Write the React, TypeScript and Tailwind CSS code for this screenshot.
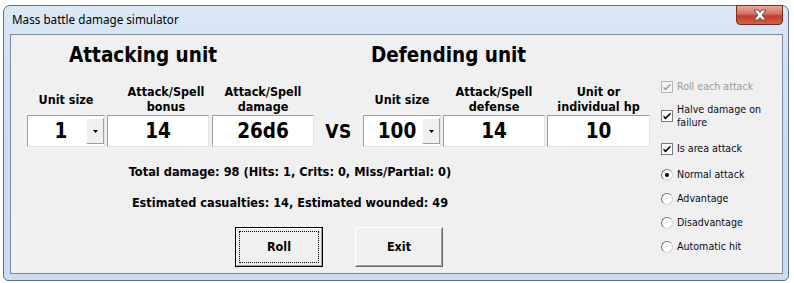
import React from 'react';

// Win7 style dialog: mass battle damage simulator

const Label = ({ children, className = '' }: { children: React.ReactNode; className?: string }) => (
  <div className={`h-[30px] flex items-center justify-center text-center text-[12.5px] leading-[15px] font-bold text-black ${className}`}>
    {children}
  </div>
);

const Field = ({ value }: { value: string }) => (
  <div className="h-[32px] bg-white border border-t-[#a0a0a0] border-l-[#a0a0a0] border-r-[#e3e3e3] border-b-[#e3e3e3] flex items-center justify-center text-[20.5px] font-bold text-black">
    {value}
  </div>
);

const Combo = ({ value }: { value: string }) => (
  <div className="h-[32px] bg-white border border-t-[#a0a0a0] border-l-[#a0a0a0] border-r-[#e3e3e3] border-b-[#e3e3e3] flex">
    <div className="flex-1 flex items-center justify-center pl-[8px] text-[20.5px] font-bold text-black">{value}</div>
    <div className="w-[18px] my-[2px] bg-[#f0f0f0] border border-t-white border-l-white border-r-[#a0a0a0] border-b-[#a0a0a0] flex items-center justify-center">
      <svg width="5" height="3" viewBox="0 0 5 3">
        <path d="M0 0h5L2.5 3z" fill="#000" />
      </svg>
    </div>
  </div>
);

const Check = ({ disabled = false }: { disabled?: boolean }) => (
  <div
    className={`w-[12px] h-[12px] shrink-0 border flex items-center justify-center ${
      disabled ? 'border-[#b5b5b5] bg-[#f4f4f4]' : 'border-[#7b7b7b] bg-white'
    }`}
  >
    <svg width="8" height="8" viewBox="0 0 8 8">
      <path d="M0.5 3.2l2 2 5-5v2.4l-5 5-2-2z" fill={disabled ? '#a0a0a0' : '#000'} />
    </svg>
  </div>
);

const Radio = ({ on = false }: { on?: boolean }) => (
  <div className="w-[12px] h-[12px] shrink-0 rounded-full border border-t-[#7b7b7b] border-l-[#7b7b7b] border-r-[#d0d0d0] border-b-[#d0d0d0] bg-white flex items-center justify-center">
    {on && <div className="w-[4px] h-[4px] rounded-full bg-black" />}
  </div>
);

export default function App() {
  return (
    <div className="w-[794px] h-[283px] bg-white overflow-hidden pt-[5px] pl-[3px] font-['DejaVu_Sans_Condensed','DejaVu_Sans',sans-serif]">
      <div className="relative w-[786px] h-[276px] rounded-t-[7px] rounded-b-[5px] border border-[#5f7085] bg-[linear-gradient(180deg,#dbe8f6_0%,#cddff2_30%,#c9dcf1_100%)] flex flex-col">
        {/* title bar */}
        <div className="h-[28px] flex items-center pl-[8px] text-[11.7px] text-black font-['Noto_Sans',sans-serif]">
          Mass battle damage simulator
        </div>
        <div className="absolute top-[-1px] right-[5px] w-[47px] h-[20px] rounded-b-[4px] border border-[#7d2c22] bg-[linear-gradient(180deg,#e9a89b_0%,#d46f5f_45%,#c13b28_55%,#d0624f_100%)] flex items-center justify-center">
          <svg width="16" height="12" viewBox="0 0 16 12">
            <path d="M2 1h4l2 2.4L10 1h4l-4 5 4 5h-4l-2-2.4L6 11H2l4-5z" fill="#fff" stroke="#4a4a4a" strokeWidth="0.9" strokeLinejoin="round" />
          </svg>
        </div>

        {/* client area */}
        <div className="ml-[6px] mr-[5px] h-[240px] border border-[#7c8b9c] bg-[#f0f0f0] flex text-black">
          {/* left part */}
          <div className="w-[650px] flex flex-col">
            <div className="mt-[8px] flex h-[24px] items-center text-[20.5px] leading-[24px] font-bold pl-[58px]">
              <div className="w-[302px]">Attacking unit</div>
              <div>Defending unit</div>
            </div>

            <div className="mt-[17px] flex pl-[16px]">
              <div className="w-[78px] flex flex-col">
                <Label>Unit size</Label>
                <div className="mt-[1px]"><Combo value="1" /></div>
              </div>
              <div className="w-[102px] ml-[2px] flex flex-col">
                <Label className="pl-[16px]">
                  Attack/Spell
                  <br />
                  bonus
                </Label>
                <div className="mt-[1px]"><Field value="14" /></div>
              </div>
              <div className="w-[102px] ml-[3px] flex flex-col">
                <Label>
                  Attack/Spell
                  <br />
                  damage
                </Label>
                <div className="mt-[1px]"><Field value="26d6" /></div>
              </div>
              <div className="w-[49px] flex flex-col">
                <div className="h-[31px]" />
                <div className="h-[32px] flex items-center justify-center text-[19px] font-bold tracking-[0.5px]">VS</div>
              </div>
              <div className="w-[78px] flex flex-col">
                <Label>Unit size</Label>
                <div className="mt-[1px]"><Combo value="100" /></div>
              </div>
              <div className="w-[102px] ml-[2px] flex flex-col">
                <Label>
                  Attack/Spell
                  <br />
                  defense
                </Label>
                <div className="mt-[1px]"><Field value="14" /></div>
              </div>
              <div className="w-[103px] ml-[2px] flex flex-col">
                <Label>
                  Unit or
                  <br />
                  individual hp
                </Label>
                <div className="mt-[1px]"><Field value="10" /></div>
              </div>
            </div>

            <div className="mt-[17px] w-[558px] h-[16px] leading-[16px] text-center text-[12.7px] font-bold">
              Total damage: 98 (Hits: 1, Crits: 0, Miss/Partial: 0)
            </div>
            <div className="mt-[15px] w-[558px] h-[16px] leading-[16px] text-center text-[12.6px] font-bold">
              Estimated casualties: 14, Estimated wounded: 49
            </div>

            <div className="mt-[16px] flex pl-[224px] gap-[32px]">
              <button className="w-[88px] h-[40px] border border-black bg-[#f0f0f0] p-0">
                <div className="h-full border border-t-white border-l-white border-r-[#a0a0a0] border-b-[#a0a0a0] p-[2px]">
                  <div className="h-full border border-dotted border-black flex items-center justify-center text-[12.5px] font-bold">
                    Roll
                  </div>
                </div>
              </button>
              <button className="w-[88px] h-[40px] border border-t-white border-l-white border-r-[#696969] border-b-[#696969] bg-[#f0f0f0] p-0">
                <div className="h-full border border-t-[#f0f0f0] border-l-[#f0f0f0] border-r-[#a0a0a0] border-b-[#a0a0a0] flex items-center justify-center text-[12.5px] font-bold">
                  Exit
                </div>
              </button>
            </div>
          </div>

          {/* right part: options */}
          <div className="flex flex-col text-[10.6px] leading-[13px] text-[#0a0a22]">
            <div className="mt-[45px] h-[13px] flex items-center gap-[4px]">
              <Check disabled />
              <span className="text-[#9a9a9a]">Roll each attack</span>
            </div>
            <div className="mt-[10px] h-[26px] flex items-center gap-[4px]">
              <Check />
              <span>
                Halve damage on
                <br />
                failure
              </span>
            </div>
            <div className="mt-[13px] h-[13px] flex items-center gap-[4px]">
              <Check />
              <span>Is area attack</span>
            </div>
            <div className="mt-[13px] h-[13px] flex items-center gap-[4px]">
              <Radio on />
              <span>Normal attack</span>
            </div>
            <div className="mt-[11px] h-[13px] flex items-center gap-[4px]">
              <Radio />
              <span>Advantage</span>
            </div>
            <div className="mt-[11px] h-[13px] flex items-center gap-[4px]">
              <Radio />
              <span>Disadvantage</span>
            </div>
            <div className="mt-[11px] h-[13px] flex items-center gap-[4px]">
              <Radio />
              <span>Automatic hit</span>
            </div>
          </div>
        </div>
      </div>
    </div>
  );
}
